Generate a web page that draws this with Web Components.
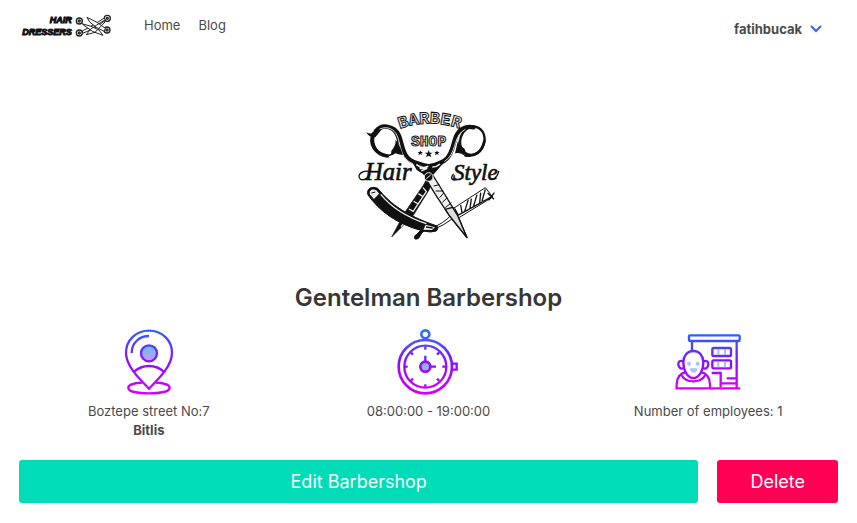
<!DOCTYPE html>
<html lang="en">
<head>
<meta charset="utf-8">
<meta name="viewport" content="width=device-width, initial-scale=1">
<title>Gentelman Barbershop</title>
<style>
body { margin: 0; background: #fff; color: #4a4a4a; font: 13px/19px Inter, "Liberation Sans", sans-serif; }
</style>
</head>
<body>
<shop-page></shop-page>

<template id="t-page">
<style>
:host { display: block; }
main { padding: 50px 19px 20px; }
shop-emblem { margin: 0 auto; }
h1 { margin: 30px 0 13px; text-align: center; color: #363636; font-size: 24px; line-height: 32px; font-weight: 600; }
.facts { display: grid; grid-template-columns: repeat(3, 1fr); margin: 0 -10px; }
.actions { display: flex; gap: 19px; margin-top: 20px; }
.grow { flex: 1; }
</style>
<site-header></site-header>
<main>
<shop-emblem></shop-emblem>
<h1>Gentelman Barbershop</h1>
<section class="facts">
<shop-fact>
<svg slot="icon" viewBox="0 0 210 210" fill="none" stroke="url(#g1)" stroke-width="7">
<defs><linearGradient id="g1" gradientUnits="userSpaceOnUse" x1="0" y1="8" x2="0" y2="200"><stop stop-color="#2962ff"/><stop offset=".5" stop-color="#8a12fc"/><stop offset="1" stop-color="#d500f9"/></linearGradient><linearGradient id="f1" x1="0" y1="0" x2="0" y2="1"><stop stop-color="#63bdf5"/><stop offset="1" stop-color="#c99cee"/></linearGradient></defs>
<path d="M105 185C92 170 36 123 36 78C36 39 67 11 105 11s69 28 69 67c0 45-56 92-69 107Z"/>
<path d="M53 78C53 48 76 27 105 27"/>
<circle cx="105" cy="79" r="24" fill="url(#f1)"/>
<path d="M59 135q20-18 46-18t46 18M85 167c-26 1-42 7-42 15 0 11 28 17 62 17s62-6 62-17c0-8-16-14-42-15"/>
</svg>
Boztepe street No:7<br><strong>Bitlis</strong>
</shop-fact>
<shop-fact>
<svg slot="icon" viewBox="0 0 210 210" fill="none" stroke="url(#g2)" stroke-width="8">
<defs><linearGradient id="g2" gradientUnits="userSpaceOnUse" x1="0" y1="8" x2="0" y2="200"><stop stop-color="#2979ff"/><stop offset=".5" stop-color="#8610fc"/><stop offset="1" stop-color="#d500f9"/></linearGradient><linearGradient id="f2" x1="0" y1="0" x2="0" y2="1"><stop stop-color="#63bdf5"/><stop offset="1" stop-color="#c99cee"/></linearGradient></defs>
<circle cx="97" cy="22" r="12"/><circle cx="97" cy="119" r="80"/><circle cx="97" cy="119" r="63" stroke-width="7"/>
<circle cx="97" cy="119" r="15" fill="url(#f2)"/>
<path d="M97 58v10M97 172v10M35 119h9M148 119h10M53 76l7 7M139 76l-7 7M53 162l7-7M139 162l-7-7M97 86v18M112 119h17M176 110h15v18h-15" stroke-width="7"/>
</svg>
08:00:00 - 19:00:00
</shop-fact>
<shop-fact>
<svg slot="icon" viewBox="0 0 210 210" fill="none" stroke="url(#g3)" stroke-width="7">
<defs><linearGradient id="g3" gradientUnits="userSpaceOnUse" x1="0" y1="22" x2="0" y2="190"><stop stop-color="#2962ff"/><stop offset=".5" stop-color="#8610fc"/><stop offset="1" stop-color="#e000f5"/></linearGradient></defs>
<rect x="48" y="25" width="152" height="17" rx="3"/>
<path d="M57 43v27M191 44v140M7 184h195M11 184v-12c0-21 12-34 26-36M111 184v-12c0-21-12-34-26-36"/>
<path d="M61 72c-20 0-30 16-30 34 0 25 13 47 30 47s30-22 30-47c0-18-10-34-30-34ZM31 104c-10-6-16 1-15 9s7 15 17 10M91 104c10-6 16 1 15 9s-7 15-17 10M25 144c8 14 21 19 36 19s28-5 36-19"/>
<rect x="118" y="63" width="56" height="24" rx="4"/><rect x="118" y="100" width="56" height="24" rx="4"/>
<path d="M116 138h27v43M143 169h49M161 154h31"/>
<g stroke="#a7bdf8" stroke-width="6"><path d="M136 67v17M156 67v17M136 104v17M156 104v17"/></g>
<g fill="#adc0fa" stroke="none"><circle cx="48" cy="110" r="6"/><circle cx="74" cy="110" r="6"/><path d="M51 124h22c0 18-22 18-22 0Z"/></g>
</svg>
Number of employees: 1
</shop-fact>
</section>
<div class="actions">
<action-button class="grow" style="--tone:#00dbb8">Edit Barbershop</action-button>
<action-button style="--tone:#ff0055">Delete</action-button>
</div>
</main>
</template>

<template id="t-header">
<style>
:host { display: flex; align-items: center; min-height: 52px; padding: 3px 35px 5px 19px; box-sizing: border-box; }
a { color: inherit; text-decoration: none; }
.brand svg { display: block; width: 96px; height: 32px; }
nav { display: flex; gap: 18px; margin-left: 29px; }
button { display: flex; align-items: center; gap: 8px; margin: 8px 0 0 auto; padding: 0; border: 0; background: none; color: inherit; font: inherit; font-weight: 700; cursor: pointer; }
button svg { width: 12px; height: 8px; }
</style>
<a class="brand" href="#" aria-label="Hair Dressers">
<svg viewBox="12 13 288 96">
<g font-family="Liberation Sans, sans-serif" font-weight="bold" font-style="italic" font-size="27" fill="#111" stroke="#111" stroke-width="3" text-anchor="end"><text x="170" y="55">HAIR</text><text x="170" y="92">DRESSERS</text></g>
<g fill="none" stroke="#222" stroke-width="4">
<circle cx="193" cy="49" r="9"/><circle cx="193" cy="49" r="3"/><circle cx="277" cy="41" r="9"/><circle cx="277" cy="41" r="3"/><circle cx="193" cy="85" r="9"/><circle cx="193" cy="85" r="3"/><circle cx="276" cy="76" r="9"/><circle cx="276" cy="76" r="3"/>
</g>
<g fill="#fff" stroke="#222" stroke-width="3" stroke-linejoin="round">
<path d="M202 79L240 58 268 40 271 47 240 70 203 86Z"/>
<path d="M268 80L244 68 224 52 216 38 246 53 271 71Z"/>
<path d="M201 57L228 65 252 76 264 92 232 80 204 60Z"/>
<path d="M268 47L244 62 226 74 214 90 240 83 270 52Z" fill="none"/>
</g>
</svg>
</a>
<nav><a href="#">Home</a><a href="#">Blog</a></nav>
<button type="button" aria-haspopup="true">fatihbucak<svg viewBox="0 0 12 8" fill="none" stroke="#3068e8" stroke-width="2"><path d="M1 1l5 5 5-5"/></svg></button>
</template>

<template id="t-emblem">
<style>:host { display: block; width: 160px; } svg { display: block; width: 100%; }</style>
<svg viewBox="-4 3 480 450" role="img" aria-label="Barber Shop Hair Style">
<defs><path id="arc" d="M148 84Q237 51 332 84"/></defs>
<g font-family="Liberation Mono, monospace" font-weight="bold" fill="#eee" stroke="#111" stroke-width="3">
<text font-size="51"><textPath href="#arc">BARBER</textPath></text>
<text x="182" y="136" font-size="44">SHOP</text>
</g>
<g fill="#111"><path d="M235 147l3 8h9l-7 5 3 9-8-5-8 5 3-9-7-5h9Z"/><path d="M210 148l2 5h6l-5 4 2 6-5-4-6 4 2-6-4-4h6ZM260 148l2 5h6l-5 4 2 6-5-4-6 4 2-6-4-4h6Z"/></g>
<g font-family="Liberation Serif, serif" font-style="italic" fill="#111" stroke="#111" stroke-width="2">
<text x="44" y="236" font-size="74">Hair</text><text x="308" y="236" font-size="69">Style</text></g>
<g fill="none" stroke="#111" stroke-width="4" stroke-linecap="round"><path d="M57 211c-22-4-38 11-28 22 9 8 22 0 29-12M309 220c-11 12-2 20 10 16M425 235q16-4 20-24"/></g>

<g fill="#111" stroke="#111" stroke-width="2" stroke-linejoin="round">
<path d="M237 220L219 253 163 335 124 408 189 343 236 267 249 232Z"/>
<path d="M228 236L255 280 298 345 350 410 322 344 277 270 247 222Z" fill="#eee" stroke-width="4"/>
</g>
<g stroke="#eee" stroke-width="4" fill="none"><path d="M218 260l10 12-40 60M204 278l13 8M190 301l14 8M176 324l14 8M167 340l12 8-27 29"/></g>
<g stroke="#111" stroke-width="3" fill="none"><path d="M250 255l17-4M256 270l23 0M268 290l12-14M276 304l15-14M285 320l18-15M295 338l18-20M302 347l36 46"/></g>

<g fill="none" stroke="#111" stroke-linecap="round">
<ellipse cx="106" cy="121" rx="36" ry="43" stroke-width="5" transform="rotate(-18 106 121)"/>
<path d="M70 98c-16 32 8 62 41 67" stroke-width="11"/>
<path d="M76 91C95 67 132 75 145 102c11 24 9 48 27 69 13 15 35 18 62 25" stroke-width="13"/>
<ellipse cx="366" cy="119" rx="36" ry="43" stroke-width="7" transform="rotate(18 366 119)"/>
<path d="M345 163c29 6 51-11 57-43" stroke-width="8"/>
<path d="M370 79c-25-6-44 7-53 27-10 25-9 48-28 67-14 14-31 18-52 23" stroke-width="13"/>
</g>
<path d="M48 94q14 7 25 0 15-9 27-15l-25 30q-20 1-27-15Z" fill="#111"/>
<path d="M88 84c25-10 44 1 52 20 11 24 8 49 27 70 16 17 40 20 65 26" fill="none" stroke="#ddd" stroke-width="3"/>
<path d="M345 85c-34 17-27 60-50 86-13 13-32 19-50 23" fill="none" stroke="#ddd" stroke-width="3"/>
<path d="M136 116q15 20 22 46-16-1-23-5l-10 6q-7-11 4-21 8-11 7-26ZM324 115q-1 20 16 26 10 9 1 22-12-9-27-6Z" fill="#111"/>
<path d="M186 184q23 17 53 4 25 2 48-14l-12 17-40 46-18-19-18-11Z" fill="#111"/>
<path d="M198 191q18 14 36 5M208 202l22-2M213 209l18-7M246 198q12 1 23-9" fill="none" stroke="#eee" stroke-width="5"/>
<circle cx="235" cy="228" r="13" fill="#111" stroke="#eee" stroke-width="3"/><path d="M228 233l13-11" stroke="#eee" stroke-width="3"/>

<path d="M243 381q35-12 61-40l7-20 94-61 22 28-106 65-13-1q-30 23-60 34Z" fill="#fff" stroke="#111" stroke-width="3"/>
<path d="M313 323l11 19 102-56M331 312l4 22M354 296l-11 35M363 293l-4 30M380 281l-11 37M391 275l-3 31M405 265l-10 35M412 276l19 19M432 275l-17 23M300 345l15 12" fill="none" stroke="#111" stroke-width="4"/>
<path d="M285 325l13 20 52 65-28-66-15-25Z" fill="#ddd" stroke="#111" stroke-width="4"/>
<path d="M247 384q-30 0-37 20-6 13-16 10-6-9 6-15 18-22 48-22Z" fill="#111" stroke="#111" stroke-width="3"/>
<path d="M53 282c-6-19 11-28 29-20 42 51 88 82 178 113q6 8-2 15-15 6-40 0C140 370 87 330 53 282Z" fill="#111" stroke="#111" stroke-width="3"/>
<path d="M59 280c-4-12 8-19 19-12l9 11-16 16Z" fill="#eee"/>
<path d="M91 280c32 39 83 70 137 88" fill="none" stroke="#eee" stroke-width="4"/>
<path d="M72 295l21-22M63 276l12-3" fill="none" stroke="#111" stroke-width="3"/>
<path d="M226 371l-7 15 26 1 9-8Z" fill="#eee"/><path d="M227 378l20 3" stroke="#111" stroke-width="4"/>
</svg>
</template>

<template id="t-fact">
<style>
:host { display: block; text-align: center; }
::slotted(svg) { display: block; width: 70px; height: 70px; margin: 0 auto 5px; }
</style>
<slot name="icon"></slot><slot></slot>
</template>

<template id="t-button">
<style>
:host { display: block; }
button { display: block; width: 100%; padding: 6px 33px; border: 0; border-radius: 3px; background: var(--tone); color: #fff; font: inherit; font-size: 18px; line-height: 31px; cursor: pointer; }
</style>
<button type="button"><slot></slot></button>
</template>

<script>
const define = (name, id) => customElements.define(name, class extends HTMLElement {
  constructor() {
    super();
    this.attachShadow({ mode: "open" }).append(document.getElementById(id).content.cloneNode(true));
  }
});
define("site-header", "t-header");
define("shop-emblem", "t-emblem");
define("shop-fact", "t-fact");
define("action-button", "t-button");
define("shop-page", "t-page");
</script>
</body>
</html>
